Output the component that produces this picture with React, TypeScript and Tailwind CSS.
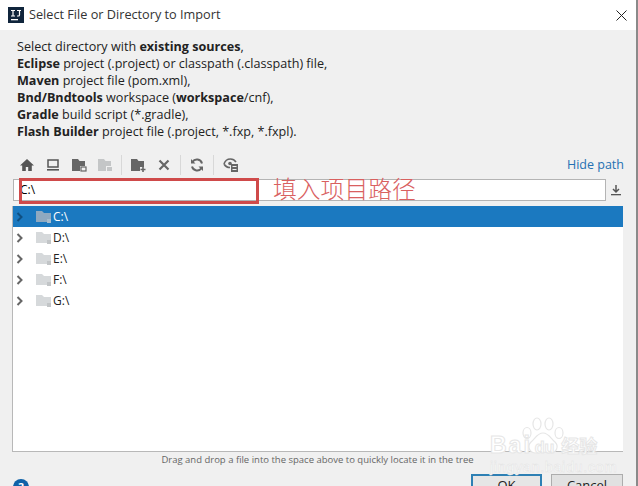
const drives = ["D:\\", "E:\\", "F:\\", "G:\\"];

function Chevron({ color }: { color: string }) {
  return (
    <svg width="8" height="10" viewBox="0 0 8 10" fill="none" stroke={color} strokeWidth="2">
      <path d="M1.5 1l4 4-4 4" />
    </svg>
  );
}

function DriveFolder({ selected }: { selected?: boolean }) {
  const body = selected ? "#8fa9c0" : "#d6d9db";
  return (
    <svg width="16" height="14" viewBox="0 0 16 14">
      <path d="M0 1h6l2 2h7v9H0z" fill={body} />
      <rect x="11" y="9" width="4" height="4" fill={selected ? "#a6bccd" : "#c2c5c7"} />
    </svg>
  );
}

function ToolIcon({ children }: { children: React.ReactNode }) {
  return (
    <svg width="16" height="16" viewBox="0 0 16 16" className="shrink-0">
      {children}
    </svg>
  );
}

function Sep() {
  return <div className="mx-[8px] h-[20px] w-px bg-[#d8d8d8]" />;
}

export default function App() {
  return (
    <div className="relative flex h-[486px] w-[638px] flex-col overflow-hidden border-r-2 border-[#8a8a8a] bg-white font-['Open_Sans','Noto_Sans',sans-serif] text-[12px] text-[#222]">
      {/* title bar */}
      <div className="flex h-[30px] shrink-0 items-center pl-[8px] pr-[9px]">
        <svg width="16" height="16" viewBox="0 0 16 16">
          <rect width="16" height="16" fill="#10253c" />
          <rect x="3" y="12" width="7" height="1.3" fill="#fff" />
          <path d="M3 3.5h4M5 3.5v5.5M3 9h4M9 3.5h4M11.5 3.5v4.5q0 1-1.2 1H9" stroke="#fff" strokeWidth="1.2" fill="none" />
        </svg>
        <span className="ml-[5px] text-[12.7px] text-[#333]">Select File or Directory to Import</span>
        <svg width="11" height="11" viewBox="0 0 11 11" className="ml-auto" stroke="#222" strokeWidth="1">
          <path d="M0.500 0.500l10 10M10.500 0.500l-10 10" />
        </svg>
      </div>

      {/* dialog body */}
      <div className="flex min-h-0 flex-1 flex-col bg-[#f0f0f0] pl-[12px] pr-[13px]">
        <div className="pl-[5px] pt-[8px] text-[12.6px] leading-[17px]">
          <div>Select directory with <b>existing sources</b>,</div>
          <div><b>Eclipse</b> project (.project) or classpath (.classpath) file,</div>
          <div><b>Maven</b> project file (pom.xml),</div>
          <div><b>Bnd/Bndtools</b> workspace (<b>workspace</b>/cnf),</div>
          <div><b>Gradle</b> build script (*.gradle),</div>
          <div><b>Flash Builder</b> project file (.project, *.fxp, *.fxpl).</div>
        </div>

        <div className="mt-[9px] h-px bg-[#a8a8a8]" />

        {/* toolbar */}
        <div className="flex h-[30px] shrink-0 items-center pl-[7px] pt-[2px]">
          <ToolIcon>
            <path d="M8 2L1 8.5h2.2V14h3.6v-4h2.4v4h3.6V8.5H15z" fill="#555" />
          </ToolIcon>
          <div className="w-[10px]" />
          <ToolIcon>
            <path d="M3 3h10v7H3z" fill="none" stroke="#555" strokeWidth="1.5" />
            <rect x="2" y="12" width="12" height="1.6" fill="#555" />
          </ToolIcon>
          <div className="w-[10px]" />
          <ToolIcon>
            <path d="M1 2h6l1.5 2H14v5H9v5H1z" fill="#666" />
            <rect x="10" y="10" width="5" height="4" fill="none" stroke="#666" strokeWidth="1.2" />
          </ToolIcon>
          <div className="w-[10px]" />
          <ToolIcon>
            <path d="M1 2h6l1.5 2H14v5H9v5H1z" fill="#c4c6c7" />
            <rect x="10" y="10" width="5" height="4" fill="#c4c6c7" />
          </ToolIcon>
          <Sep />
          <ToolIcon>
            <path d="M1 2h6l1.5 2H14v6h-4v4H1z" fill="#666" />
            <path d="M13 10v5M10.5 12.5h5" stroke="#666" strokeWidth="1.6" />
          </ToolIcon>
          <div className="w-[10px]" />
          <ToolIcon>
            <path d="M3.5 3.5l9 9M12.5 3.5l-9 9" stroke="#666" strokeWidth="2.2" />
          </ToolIcon>
          <Sep />
          <ToolIcon>
            <path d="M13 6.5A5.3 5.3 0 0 0 3.4 5M3 9.5A5.3 5.3 0 0 0 12.6 11" fill="none" stroke="#666" strokeWidth="2" />
            <path d="M2 2v4.5h4.5zM14 14V9.500h-4.500z" fill="#666" />
          </ToolIcon>
          <div className="ml-[8px] mr-[9px] h-[20px] w-px bg-[#d8d8d8]" />
          <ToolIcon>
            <path d="M1 7q1.500-5 6.500-5 3.500 0 5.500 3M7 10.500Q3 10.500 1 7" fill="none" stroke="#666" strokeWidth="1.6" />
            <circle cx="7" cy="6.500" r="1.800" fill="#666" />
            <rect x="8" y="7" width="7" height="8" fill="#666" />
            <path d="M9.500 9.500h4M9.500 12.500h4" stroke="#f0f0f0" strokeWidth="1.200" />
          </ToolIcon>
          <span className="-mr-[1px] ml-auto text-[12.5px] text-[#2470b3]">Hide path</span>
        </div>

        {/* path field */}
        <div className="flex h-[22px] shrink-0 items-center pl-[1px]">
          <div className="flex h-full flex-1 items-center border border-[#b4b4b4] bg-white pl-[6px] text-[12px] text-black">
            C:\
          </div>
          <div className="flex w-[17px] justify-end pr-[1px]">
            <svg width="12" height="12" viewBox="0 0 12 12">
              <path d="M6 1v6M3 5l3 3 3-3" fill="none" stroke="#555" strokeWidth="1.5" />
              <rect x="1" y="10" width="10" height="1.3" fill="#555" />
            </svg>
          </div>
        </div>

        {/* tree */}
        <div className="mt-[5px] h-[246px] shrink-0 border-b border-l border-[#b8b8b8] bg-white">
          <div className="flex h-[21px] items-center bg-[#1b79c0] pl-[3px] text-white">
            <Chevron color="#0f4f80" />
            <div className="ml-[12px] mr-[1px]"><DriveFolder selected /></div>
            <span>C:\</span>
          </div>
          {drives.map((drive) => (
            <div key={drive} className="flex h-[21px] items-center pl-[3px] text-[#222]">
              <Chevron color="#666" />
              <div className="ml-[12px] mr-[1px]"><DriveFolder /></div>
              <span>{drive}</span>
            </div>
          ))}
        </div>

        <div className="mt-[1px] text-center text-[9.5px] leading-[14px] text-[#666]">
          Drag and drop a file into the space above to quickly locate it in the tree
        </div>

        {/* footer */}
        <div className="relative mt-[7px] flex items-start pl-[1px]">
          <div className="mt-[5px] flex h-[16px] w-[16px] items-center justify-center rounded-full bg-[#0f62a8] text-[11px] font-bold text-white">?</div>
          <div className="ml-auto flex h-[24px] w-[71px] items-center justify-center border-2 border-[#2e80b4] bg-[#e6e6e6] text-[13px]">OK</div>
          <div className="ml-[9px] flex h-[24px] w-[72px] items-center justify-center border border-[#adadad] bg-[#e1e1e1] text-[13px]">Cancel</div>
        </div>
      </div>

      {/* red annotation drawn over the screenshot */}
      <div className="absolute left-[19px] top-[178px] h-[26px] w-[240px] border-[3px] border-[#cf4a4a]" />
      <div className="absolute left-[273px] top-[172px] font-['Noto_Sans_CJK_SC',sans-serif] text-[23.8px] font-light leading-[32px] text-[#d9605f]">填入项目路径</div>

      {/* baidu watermark */}
      <div className="pointer-events-none absolute left-[490px] top-[416px] h-[56px] w-[114px] text-white [-webkit-text-stroke:1px_#e6e6e6]">
        <svg width="48" height="42" viewBox="0 0 48 42" fill="none" stroke="#e6e6e6" strokeWidth="1.2" className="absolute left-[29px] top-0">
          <ellipse cx="8" cy="17" rx="4" ry="5.500" fill="#fff" />
          <ellipse cx="18" cy="8" rx="4" ry="6" fill="#fff" />
          <ellipse cx="30" cy="8" rx="4" ry="6" fill="#fff" />
          <ellipse cx="40" cy="17" rx="4" ry="5.500" fill="#fff" />
          <path d="M24 17c-6 0-8 6-12 9-4 4-2 11 5 11 3 0 5-1 7-1s4 1 7 1c7 0 9-7 5-11-4-3-6-9-12-9z" fill="#fff" />
        </svg>
        <div className="absolute left-0 top-[17px] flex items-baseline whitespace-nowrap font-['Liberation_Sans','Noto_Sans_CJK_SC',sans-serif] text-[23px] font-bold leading-[24px]">
          <span className="tracking-[2px]">Bai</span>
          <span className="ml-[3px] text-[16px]">du</span>
          <span className="ml-[7px] text-[18px]">经验</span>
        </div>
        <div className="absolute left-0 top-[43px] whitespace-nowrap font-['Liberation_Sans',sans-serif] text-[14.500px] leading-[16px] tracking-[0.6px] [-webkit-text-stroke:0.5px_#e2e2e2]">jingyan.baidu.com</div>
      </div>
    </div>
  );
}
